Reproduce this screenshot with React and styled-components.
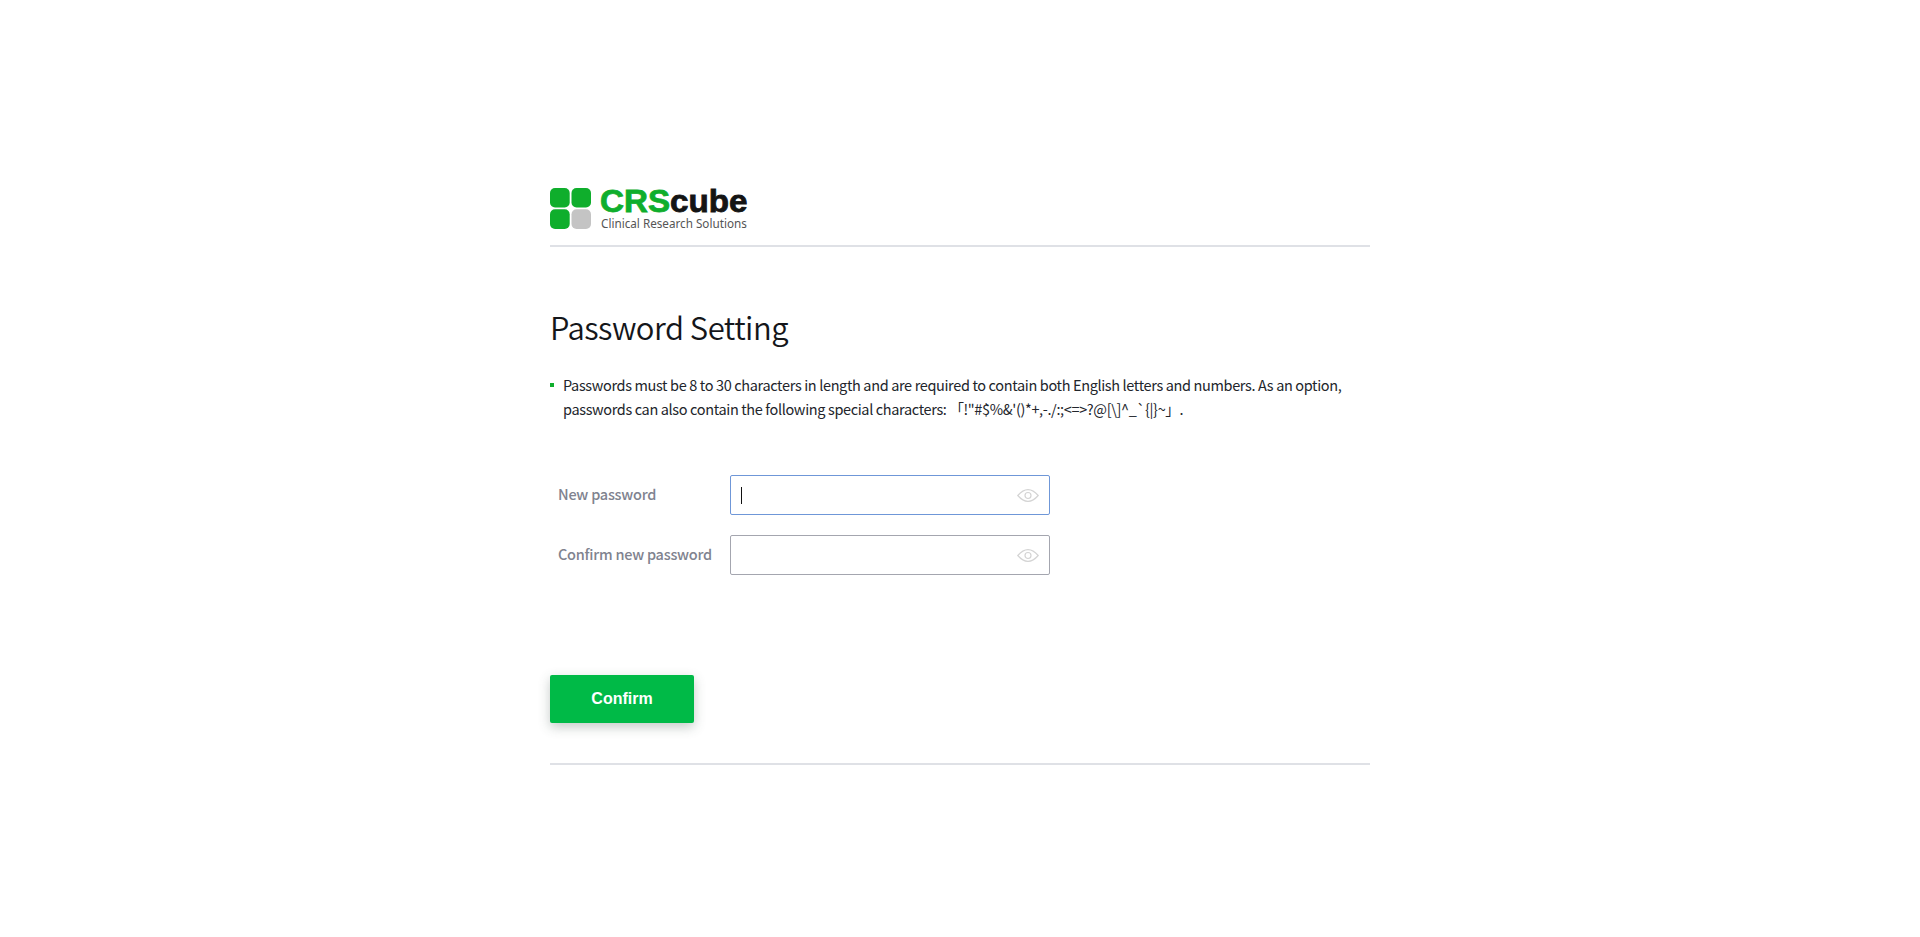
import React from 'react'
import styled, { createGlobalStyle } from 'styled-components'

const GlobalStyle = createGlobalStyle`
  html, body {
    margin: 0;
    padding: 0;
    background: #fff;
  }
  body {
    font-family: "Noto Sans CJK KR", "Noto Sans", sans-serif;
    color: #1a1a1a;
  }
`

const Page = styled.div`
  width: 820px;
  margin: 0 auto;
  padding-top: 187px;
`

const Header = styled.header`
  height: 58px;
  border-bottom: 2px solid #dfe1e6;
`

const Logo = styled.div`
  display: flex;
  align-items: flex-start;
  gap: 9px;
  padding-top: 1px;
`

const LogoText = styled.div`
  display: flex;
  flex-direction: column;
  margin-top: -1px;
`

const Brand = styled.div`
  font-family: "Liberation Sans", Arial, sans-serif;
  font-weight: 700;
  font-size: 31px;
  line-height: 29px;
  height: 29px;
  color: #141414;
  white-space: nowrap;
  -webkit-text-stroke: 0.8px currentColor;
  transform: scaleX(1.07);
  transform-origin: left center;
`

const BrandGreen = styled.span`
  color: #0fae2c;
`

const Tagline = styled.div`
  margin-left: 1px;
  font-family: "Noto Sans", sans-serif;
  font-size: 11.7px;
  line-height: 14px;
  color: #555;
  white-space: nowrap;
`

const Title = styled.h1`
  margin: 55px 0 0;
  font-size: 31px;
  font-weight: 350;
  line-height: 50px;
  letter-spacing: -0.5px;
  color: #14161a;
`

const Notice = styled.ul`
  list-style: none;
  margin: 21px 0 0;
  padding: 0;
`

const NoticeItem = styled.li`
  position: relative;
  padding-left: 13px;
  font-size: 14.5px;
  line-height: 24px;
  letter-spacing: -0.36px;
  white-space: nowrap;
  color: #22252b;
  &::before {
    content: '';
    position: absolute;
    left: 0;
    top: 10px;
    width: 4px;
    height: 4px;
    background: #0fae2c;
  }
`

const Form = styled.div`
  display: flex;
  flex-direction: column;
  gap: 20px;
  margin-top: 54px;
`

const Row = styled.div`
  display: flex;
  align-items: center;
`

const Label = styled.label`
  width: 180px;
  padding: 0 0 4px 8px;
  box-sizing: border-box;
  font-size: 14.5px;
  font-weight: 500;
  letter-spacing: -0.25px;
  color: #80838f;
`

const InputWrap = styled.div`
  position: relative;
  width: 320px;
  height: 40px;
  box-sizing: border-box;
  border: 1px solid ${p => (p.$focused ? '#6f97d8' : '#a4a6af')};
  border-radius: 2px;
  background: #fff;
`

const Caret = styled.span`
  position: absolute;
  left: 10px;
  top: 11px;
  width: 1px;
  height: 17px;
  background: #111;
`

const EyeIcon = styled.svg`
  position: absolute;
  right: 10px;
  top: 13px;
  width: 22px;
  height: 13px;
  fill: none;
  stroke: #d4d4d4;
  stroke-width: 1.2;
`

const Actions = styled.div`
  margin-top: 100px;
`

const Button = styled.button`
  display: block;
  width: 144px;
  height: 48px;
  border: 0;
  border-radius: 2px;
  background: #00ba47;
  color: #fff;
  font-family: "Liberation Sans", Arial, sans-serif;
  font-size: 16px;
  font-weight: 700;
  box-shadow: 0 4px 12px rgba(60, 80, 70, 0.3);
`

const Footer = styled.div`
  margin-top: 40px;
  height: 2px;
  background: #dfe1e6;
`

const Eye = () => (
  <EyeIcon viewBox="0 0 22 13">
    <path d="M0.8 6.5 C4.5 2.2 8 0.7 11 0.7 C14 0.7 17.5 2.2 21.2 6.5 C17.5 10.8 14 12.3 11 12.3 C8 12.3 4.5 10.8 0.8 6.5 Z" />
    <circle cx="11" cy="6.5" r="3" />
  </EyeIcon>
)

const CubeLogo = () => (
  <svg width="41" height="41" viewBox="0 0 41 41">
    <rect x="0" y="0" width="19.7" height="19.5" rx="5" fill="#0fae2c" />
    <rect x="21.5" y="0" width="19.5" height="19.5" rx="5" fill="#0fae2c" />
    <rect x="0" y="21.3" width="19.7" height="19.7" rx="5" fill="#0fae2c" />
    <rect x="21.5" y="21.3" width="19.5" height="19.7" rx="5" fill="#c4c4c4" />
  </svg>
)

export default function App () {
  return (
    <Page>
      <GlobalStyle />
      <Header>
        <Logo>
          <CubeLogo />
          <LogoText>
            <Brand><BrandGreen>CRS</BrandGreen>cube</Brand>
            <Tagline>Clinical Research Solutions</Tagline>
          </LogoText>
        </Logo>
      </Header>
      <Title>Password Setting</Title>
      <Notice>
        <NoticeItem>
          Passwords must be 8 to 30 characters in length and are required to contain both English letters and numbers. As an option,<br />
          passwords can also contain the following special characters: 「!"#$%&amp;'()*+,-./:;&lt;=&gt;?@[\]^_`{'{'}|{'}'}~」.
        </NoticeItem>
      </Notice>
      <Form>
        <Row>
          <Label>New password</Label>
          <InputWrap $focused>
            <Caret />
            <Eye />
          </InputWrap>
        </Row>
        <Row>
          <Label>Confirm new password</Label>
          <InputWrap>
            <Eye />
          </InputWrap>
        </Row>
      </Form>
      <Actions>
        <Button>Confirm</Button>
      </Actions>
      <Footer />
    </Page>
  )
}
